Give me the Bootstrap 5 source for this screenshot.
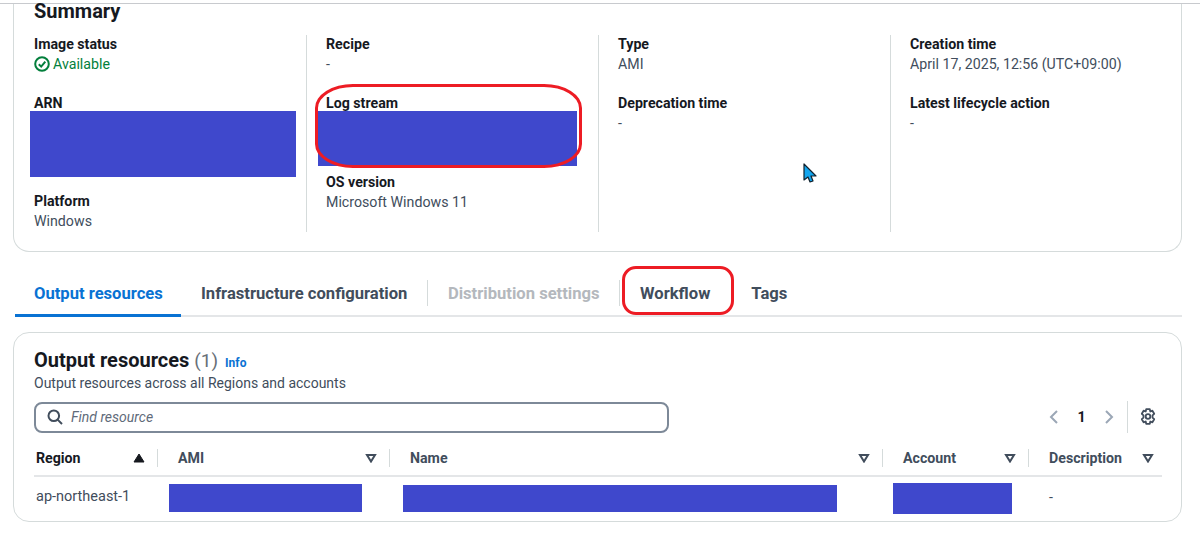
<!DOCTYPE html>
<html lang="en">
<head>
<meta charset="utf-8">
<title>Image details</title>
<link rel="stylesheet" href="https://cdn.jsdelivr.net/npm/bootstrap@5.3.0/dist/css/bootstrap.min.css">
<style>
html,body{height:540px;overflow:hidden;background:#fff}
body{font-family:Roboto,"Liberation Sans",sans-serif;font-size:14.2px;line-height:20px;color:#414d5c;position:relative}
.page-rule{height:4px;border-bottom:1px solid #c8cace}
.panel-box{margin:0 18px 0 13px;border:1px solid #d5dbdb;background:#fff}
.sum-box{height:248px;border-top:0;border-radius:0 0 16px 16px}
.sum-title{font-size:20px;line-height:14px;font-weight:700;color:#16191f;padding-left:20px;height:31px}
.sum-cols{display:grid;grid-template-columns:repeat(4,292px);height:197px}
.sum-col{padding-left:19px;margin-top:0;border-left:1px solid #d5dbdb}
.sum-col:first-child{border-left:0;padding-left:20px}
.kv{margin-bottom:19px}
.kv:first-child{margin-top:-1px}
.kv:last-child{margin-bottom:0}
.kv-label{font-weight:700;font-size:14.2px;color:#16191f}
.ok-text{color:#037f3c;display:flex;align-items:center;gap:3px}
.redact{background:#3f48cc;display:block}
.r-arn{width:266px;height:66px;margin:-2px 0 14px -4px}
.r-log{width:259px;height:55px;margin:-2px 0 6px -8px}
.tab-strip{margin:14px 18px 0 15px;height:51px;border-bottom:2px solid #e4e6e8;display:flex;align-items:flex-start}
.tab-item{font-size:16.6px;line-height:22px;font-weight:700;color:#414d5c;padding:17px 20px 0;height:51px;position:relative;white-space:nowrap}
.tab-item.sep{padding-right:20.5px}
.tab-item.sep::after{content:"";position:absolute;right:0;top:14px;height:26px;width:1px;background:#d5dbdb}
.tab-on{color:#0972d3;border-bottom:3px solid #0972d3;padding-left:19px;width:166px}
.tab-off{color:#b4b8bd}
.tab-last{padding-left:21px}
.res-box{height:190px;margin-top:15px;border-radius:16px;padding:14px 20px 0}
.res-title{font-size:20px;line-height:26px;font-weight:700;color:#16191f;display:flex;align-items:baseline}
.res-count{font-weight:400;font-size:19px;color:#687078;margin-left:5px}
.info-link{font-size:12px;font-weight:700;color:#0972d3;margin-left:7px;text-decoration:none}
.res-desc{line-height:20px;margin-top:-3px;font-size:14px}
.tool-row{display:flex;align-items:center;margin-top:8px;height:32px}
.find-box{width:635px;height:31px;border:2px solid #7d8998;border-radius:8px;display:flex;align-items:center;padding-left:11px;gap:8px;font-style:italic;color:#5f6b7a;font-size:14px}
.pager{margin-left:auto;display:flex;align-items:center;margin-right:5px}
.pager-num{font-weight:700;color:#16191f;width:43px;text-align:center}
.pager-gear{border-left:1px solid #d5dbdb;margin-left:12px;padding-left:12px;height:32px;display:flex;align-items:center}
.res-table{table-layout:fixed;width:1128px;margin:8px 0 0;--bs-table-color:#414d5c}
.res-table th{font-weight:700;font-size:14.2px;height:35px;padding:0 0 0 20px;border-bottom:2px solid #e4e6e8;position:relative;vertical-align:middle;color:#414d5c}
.res-table th:first-child{padding-left:2px;color:#16191f}
.res-table th.ruled::after{content:"";position:absolute;right:0;top:8px;height:18px;width:1px;background:#d5dbdb}
.th-in{display:flex;justify-content:space-between;align-items:center;padding-right:13px}
.th-last{padding-right:8px}
.res-table td{border:0;padding:0;height:43px;vertical-align:middle}
.res-table td:first-child{padding-left:2px;padding-bottom:2px;font-size:14.5px}
.dash-cell{padding-left:20px!important;padding-bottom:3px!important}
.r-ami{width:193px;height:28px;margin-left:11px}
.r-name{width:434px;height:27px;margin-left:13px}
.r-acct{width:119px;height:31px;margin-left:10px}
.mark-ring{position:absolute;border:3px solid #ed1c24;background:transparent}
.ring-log{left:315px;top:84px;width:267px;height:84px;border-radius:38px/24px}
.ring-flow{left:622px;top:266px;width:112px;height:49px;border-radius:14px}
.cursor-mark{position:absolute;left:803px;top:163px}
</style>
</head>
<body>
<div class="page-rule"></div>
<section class="panel-box sum-box">
  <div class="sum-title">Summary</div>
  <div class="sum-cols">
    <div class="sum-col">
      <div class="kv"><div class="kv-label">Image status</div>
        <div class="ok-text"><svg width="16" height="16" viewBox="0 0 16 16" fill="none" stroke="#037f3c" stroke-width="2"><circle cx="8" cy="8" r="6.8"/><path d="M4.8 8.2 7.2 10.6 11.3 5.6"/></svg>Available</div></div>
      <div class="kv-label">ARN</div>
      <span class="redact r-arn"></span>
      <div class="kv"><div class="kv-label">Platform</div><div>Windows</div></div>
    </div>
    <div class="sum-col">
      <div class="kv"><div class="kv-label">Recipe</div><div>-</div></div>
      <div class="kv-label">Log stream</div>
      <span class="redact r-log"></span>
      <div class="kv"><div class="kv-label">OS version</div><div>Microsoft Windows 11</div></div>
    </div>
    <div class="sum-col">
      <div class="kv"><div class="kv-label">Type</div><div>AMI</div></div>
      <div class="kv"><div class="kv-label">Deprecation time</div><div>-</div></div>
    </div>
    <div class="sum-col">
      <div class="kv"><div class="kv-label">Creation time</div><div>April 17, 2025, 12:56 (UTC+09:00)</div></div>
      <div class="kv"><div class="kv-label">Latest lifecycle action</div><div>-</div></div>
    </div>
  </div>
</section>

<nav class="tab-strip">
  <div class="tab-item tab-on">Output resources</div>
  <div class="tab-item sep">Infrastructure configuration</div>
  <div class="tab-item tab-off sep">Distribution settings</div>
  <div class="tab-item">Workflow</div>
  <div class="tab-item tab-last">Tags</div>
</nav>

<section class="panel-box res-box">
  <div class="res-title">Output resources<span class="res-count">(1)</span><a class="info-link" href="#">Info</a></div>
  <div class="res-desc">Output resources across all Regions and accounts</div>
  <div class="tool-row">
    <div class="find-box"><svg width="16" height="16" viewBox="0 0 16 16" fill="none" stroke="#414d5c" stroke-width="2"><circle cx="6.8" cy="6.8" r="5.3"/><path d="M10.6 10.6 15 15"/></svg>Find resource</div>
    <div class="pager">
      <svg width="12" height="16" viewBox="0 0 12 16" fill="none" stroke="#9ba7b6" stroke-width="2"><path d="M9 2 3 8l6 6"/></svg>
      <span class="pager-num">1</span>
      <svg width="12" height="16" viewBox="0 0 12 16" fill="none" stroke="#9ba7b6" stroke-width="2"><path d="M3 2l6 6-6 6"/></svg>
      <div class="pager-gear"><svg width="16" height="18" viewBox="0 0 16 18" fill="none" stroke="#414d5c" stroke-width="1.8" stroke-linejoin="round"><path d="M6.2 1.2h3.6l.5 2.3 2.1-.8 1.8 3.1-1.7 1.6v2.2l1.7 1.6-1.8 3.1-2.1-.8-.5 2.3H6.2l-.5-2.3-2.1.8-1.8-3.1 1.7-1.6V7.4L1.8 5.8l1.8-3.1 2.1.8z"/><circle cx="8" cy="8.5" r="2.3"/></svg></div>
    </div>
  </div>
  <table class="table res-table">
    <colgroup><col style="width:124px"><col style="width:232px"><col style="width:493px"><col style="width:146px"><col style="width:133px"></colgroup>
    <thead><tr>
      <th class="ruled"><div class="th-in">Region<svg width="12" height="10" viewBox="0 0 12 10"><path d="M6 1 11 9H1z" fill="#16191f" stroke="#16191f"/></svg></div></th>
      <th class="ruled"><div class="th-in">AMI<svg width="12" height="10" viewBox="0 0 12 10" fill="none" stroke="#414d5c" stroke-width="2"><path d="M2 2h8L6 8.5z"/></svg></div></th>
      <th class="ruled"><div class="th-in">Name<svg width="12" height="10" viewBox="0 0 12 10" fill="none" stroke="#414d5c" stroke-width="2"><path d="M2 2h8L6 8.5z"/></svg></div></th>
      <th class="ruled"><div class="th-in">Account<svg width="12" height="10" viewBox="0 0 12 10" fill="none" stroke="#414d5c" stroke-width="2"><path d="M2 2h8L6 8.5z"/></svg></div></th>
      <th><div class="th-in th-last">Description<svg width="12" height="10" viewBox="0 0 12 10" fill="none" stroke="#414d5c" stroke-width="2"><path d="M2 2h8L6 8.5z"/></svg></div></th>
    </tr></thead>
    <tbody><tr>
      <td>ap-northeast-1</td>
      <td><span class="redact r-ami"></span></td>
      <td><span class="redact r-name"></span></td>
      <td><span class="redact r-acct"></span></td>
      <td class="dash-cell">-</td>
    </tr></tbody>
  </table>
</section>

<div class="mark-ring ring-log"></div>
<div class="mark-ring ring-flow"></div>
<svg class="cursor-mark" width="15" height="20" viewBox="0 0 15 20"><path d="M1 1v16l4-3 2 5 3-1-2-5h5z" fill="#12a5ee" stroke="#10222e" stroke-width="1.2" stroke-linejoin="round"/></svg>
<script src="https://cdn.jsdelivr.net/npm/bootstrap@5.3.0/dist/js/bootstrap.bundle.min.js"></script>
</body>
</html>
